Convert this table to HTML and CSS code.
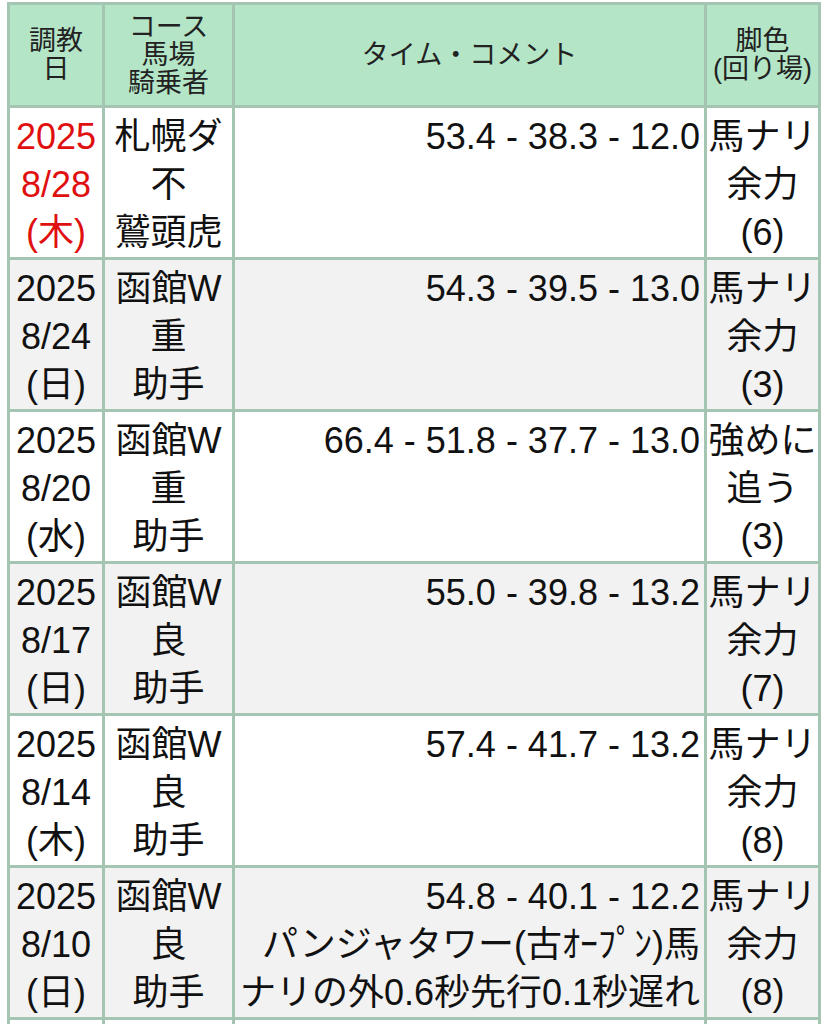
FILE: index.html
```html
<!DOCTYPE html>
<html lang="ja">
<head>
<meta charset="utf-8">
<title>調教</title>
<link rel="stylesheet" href="styles.css">
</head>
<body>
<div class="wrap">
<table class="training">
  <thead>
    <tr>
      <th class="c-date">調教<br>日</th>
      <th class="c-course">コース<br>馬場<br>騎乗者</th>
      <th class="c-time">タイム・コメント</th>
      <th class="c-leg">脚色<br>(回り場)</th>
    </tr>
  </thead>
  <tbody>
    <tr>
      <td class="date red">2025<br>8/28<br>(木)</td>
      <td class="course">札幌ダ<br>不<br>鷲頭虎</td>
      <td class="time">53.4 - 38.3 - 12.0</td>
      <td class="leg">馬ナリ<br>余力<br>(6)</td>
    </tr>
    <tr class="alt">
      <td class="date">2025<br>8/24<br>(日)</td>
      <td class="course">函館W<br>重<br>助手</td>
      <td class="time">54.3 - 39.5 - 13.0</td>
      <td class="leg">馬ナリ<br>余力<br>(3)</td>
    </tr>
    <tr>
      <td class="date">2025<br>8/20<br>(水)</td>
      <td class="course">函館W<br>重<br>助手</td>
      <td class="time">66.4 - 51.8 - 37.7 - 13.0</td>
      <td class="leg">強めに<br>追う<br>(3)</td>
    </tr>
    <tr class="alt">
      <td class="date">2025<br>8/17<br>(日)</td>
      <td class="course">函館W<br>良<br>助手</td>
      <td class="time">55.0 - 39.8 - 13.2</td>
      <td class="leg">馬ナリ<br>余力<br>(7)</td>
    </tr>
    <tr>
      <td class="date">2025<br>8/14<br>(木)</td>
      <td class="course">函館W<br>良<br>助手</td>
      <td class="time">57.4 - 41.7 - 13.2</td>
      <td class="leg">馬ナリ<br>余力<br>(8)</td>
    </tr>
    <tr class="alt">
      <td class="date">2025<br>8/10<br>(日)</td>
      <td class="course">函館W<br>良<br>助手</td>
      <td class="time">54.8 - 40.1 - 12.2<br>パンジャタワー(古ｵｰﾌﾟﾝ)馬ナリの外0.6秒先行0.1秒遅れ</td>
      <td class="leg">馬ナリ<br>余力<br>(8)</td>
    </tr>
    <tr>
      <td class="date">2025<br>8/7<br>(木)</td>
      <td class="course">函館W<br>良<br>助手</td>
      <td class="time">56.1 - 40.9 - 12.9</td>
      <td class="leg">馬ナリ<br>余力<br>(8)</td>
    </tr>
  </tbody>
</table>
</div>
</body>
</html>
```

FILE: styles.css
```css
html, body {
  margin: 0;
  padding: 0;
  background: #ffffff;
}

.wrap {
  padding: 2px 0 0 7px;
}

.training {
  border-collapse: separate;
  border-spacing: 0;
  table-layout: fixed;
  width: 814px;
  border-left: 3px solid #a3c5b1;
  border-top: 3px solid #a3c5b1;
  font-family: "Liberation Sans", Arial, "Noto Sans CJK JP", sans-serif;
  color: #111;
}

.training th,
.training td {
  box-sizing: border-box;
  border-right: 3px solid #a3c5b1;
  border-bottom: 3px solid #a3c5b1;
}

.training th {
  background: #b4e5c7;
  font-weight: normal;
  font-size: 27px;
  line-height: 28px;
  padding: 7px 1px;
  text-align: center;
  vertical-align: middle;
  height: 103px;
  color: #222;
}

.c-date { width: 95px; }
.c-course { width: 130px; }
.c-time { width: 472px; }
.c-leg { width: 114px; }

.training td {
  font-size: 36px;
  line-height: 48px;
  padding: 5px 2px 0 2px;
  vertical-align: top;
  background: #ffffff;
}

.training tr.alt td {
  background: #f2f2f2;
}

.training td.date,
.training td.course,
.training td.leg {
  text-align: center;
  white-space: nowrap;
}

.training td.leg {
  padding-left: 0;
  padding-right: 0;
}

.training td.time {
  text-align: right;
  padding-right: 4px;
}

.red {
  color: #e01010;
}
```
